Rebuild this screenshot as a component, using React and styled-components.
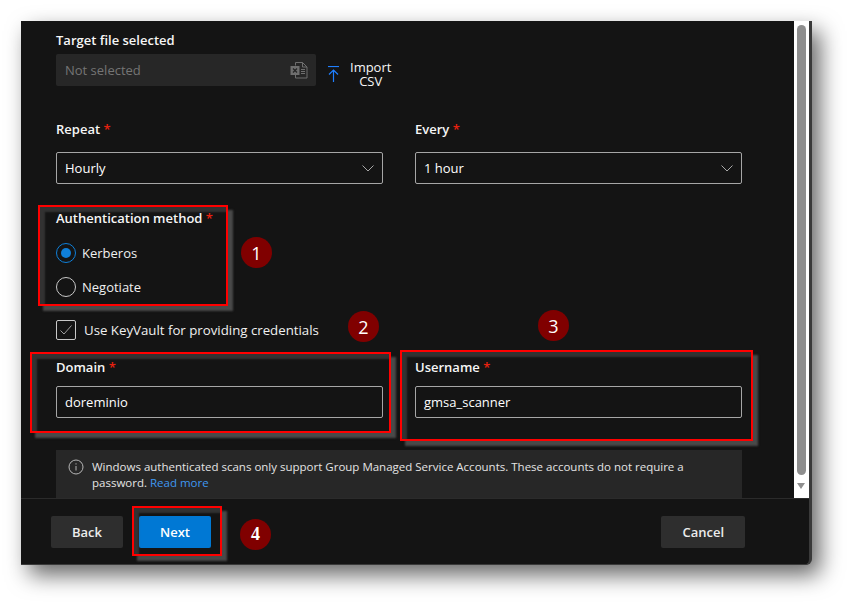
import React from 'react'
import styled, { createGlobalStyle } from 'styled-components'

const Global = createGlobalStyle`
  html, body { margin: 0; background: #fff; }
  body { font-family: "Open Sans", "Noto Sans", "Liberation Sans", sans-serif; }
  * { box-sizing: border-box; }
`

function Chevron() {
  return (
    <svg width="12" height="7" viewBox="0 0 12 7" fill="none" stroke="#a8a8a8" strokeWidth="1">
      <path d="M.5.5L6 6l5.500-5.500" />
    </svg>
  )
}

function ExcelIcon() {
  return (
    <svg width="18" height="17" viewBox="0 0 18 17" fill="none" stroke="#6f6f6f" strokeWidth="1">
      <path d="M5.5 3.5V.5h7l4.500 4.500v11h-11.500v-3" />
      <path d="M12.500.5v4.500h4.500" />
      <path d="M11 7.500h4M11 9.500h4M11 11.500h4" />
      <rect x=".5" y="4" width="9" height="9" fill="#6f6f6f" stroke="none" />
      <path d="M3 6.500l4 4M7 6.500l-4 4" stroke="#272727" strokeWidth="1.300" />
    </svg>
  )
}

function UploadIcon() {
  return (
    <svg width="11" height="16" viewBox="0 0 11 16" fill="none" stroke="#1f7fff" strokeWidth="1.200">
      <path d="M0 .5h11" />
      <path d="M5.500 16V4M1 8.500L5.500 4 10 8.500" />
    </svg>
  )
}

function InfoIcon() {
  return (
    <svg width="16" height="16" viewBox="0 0 16 16" fill="none" stroke="#b5b5b5" strokeWidth="1">
      <circle cx="8" cy="8" r="7" />
      <path d="M8 7v4.500M8 4.300v1.200" />
    </svg>
  )
}

function CheckIcon() {
  return (
    <svg width="14" height="12" viewBox="0 0 14 12" fill="none" stroke="#a0a0a0" strokeWidth="1">
      <path d="M1.500 6.500l3.500 3.500 7.500-8.500" />
    </svg>
  )
}

export default function App() {
  return (
    <>
      <Global />
      <Page>
        <Window>
          <Main>
            <Content>
              <Label>Target file selected</Label>
              <FileRow>
                <FileBox>
                  <span>Not selected</span>
                  <ExcelIcon />
                </FileBox>
                <ImportAction>
                  <UploadIcon />
                  <ImportText>Import<br />CSV</ImportText>
                </ImportAction>
              </FileRow>

              <Columns $top={33}>
                <div>
                  <Label>Repeat <Star>*</Star></Label>
                  <Select $top={13}>Hourly<Chevron /></Select>
                </div>
                <div>
                  <Label>Every <Star>*</Star></Label>
                  <Select $top={13}>1 hour<Chevron /></Select>
                </div>
              </Columns>

              <AuthLabel>Authentication method <Star>*</Star></AuthLabel>
              <Choice $top={15}><Radio $on />Kerberos</Choice>
              <Choice $top={14}><Radio />Negotiate</Choice>

              <KeyVault><CheckBox><CheckIcon /></CheckBox>Use KeyVault for providing credentials</KeyVault>

              <Columns $top={17}>
                <div>
                  <Label>Domain <Star>*</Star></Label>
                  <Select $top={9}>doreminio</Select>
                </div>
                <div>
                  <Label>Username <Star>*</Star></Label>
                  <Select $top={9}>gmsa_scanner</Select>
                </div>
              </Columns>

              <Notice>
                <InfoIcon />
                <p>
                  Windows authenticated scans only support Group Managed Service Accounts. These accounts do not require a
                  password. <a>Read more</a>
                </p>
              </Notice>
            </Content>
            <Scrollbar>
              <Thumb />
              <DownArrow />
            </Scrollbar>
          </Main>
          <Footer>
            <Button>Back</Button>
            <Button $primary>Next</Button>
            <Button $push>Cancel</Button>
          </Footer>
        </Window>

        <RedBox $x={38} $y={205} $w={190} $h={101} />
        <RedBox $x={30} $y={352} $w={361} $h={81} />
        <RedBox $x={400} $y={350} $w={353} $h={91} />
        <RedBox $x={132} $y={506} $w={90} $h={50} />

        <Badge $x={241} $y={237}>1</Badge>
        <Badge $x={348} $y={311}>2</Badge>
        <Badge $x={538} $y={310}>3</Badge>
        <Badge $x={240} $y={519} $serif>4</Badge>
      </Page>
    </>
  )
}

const Page = styled.div`
  position: relative;
  width: 854px;
  height: 607px;
  padding: 21px 0 0 21px;
  overflow: hidden;
`
const Window = styled.div`
  width: 791px;
  height: 544px;
  display: flex;
  flex-direction: column;
  background: #141414;
  border-right: 3px solid #3a3a3a;
  border-bottom: 1px solid #3a3a3a;
  border-bottom-right-radius: 6px;
  box-shadow: 8px 10px 22px rgba(0, 0, 0, 0.6);
`
const Main = styled.div`
  flex: 1;
  display: flex;
  min-height: 0;
`
const Content = styled.div`
  flex: 1;
  padding: 9px 0 0 35px;
`
const Label = styled.div`
  font-size: 13px;
  font-weight: 600;
  line-height: 20px;
  color: #f6f6f6;
`
const Star = styled.span`
  color: #e8210f;
`
const FileRow = styled.div`
  display: flex;
  align-items: flex-start;
  height: 32px;
  margin-top: 4px;
`
const FileBox = styled.div`
  width: 260px;
  height: 32px;
  margin-right: 12px;
  padding: 0 8px 0 9px;
  display: flex;
  align-items: center;
  justify-content: space-between;
  background: #272727;
  border-radius: 2px;
  font-size: 13px;
  color: #757575;
`
const ImportAction = styled.div`
  display: flex;
  align-items: center;
  margin-top: 6px;
`
const ImportText = styled.div`
  margin-left: 11px;
  font-size: 13px;
  line-height: 14px;
  text-align: center;
  color: #f6f6f6;
`
const Columns = styled.div`
  display: grid;
  grid-template-columns: 327px 327px;
  column-gap: 32px;
  margin-top: ${p => p.$top}px;
`
const Select = styled.div`
  height: 32px;
  margin-top: ${p => p.$top}px;
  padding: 0 8px;
  display: flex;
  align-items: center;
  justify-content: space-between;
  border: 1px solid #a6a6a6;
  border-radius: 2px;
  font-size: 13px;
  color: #fff;
`
const AuthLabel = styled(Label)`
  margin-top: 24px;
`
const Choice = styled.div`
  display: flex;
  align-items: center;
  gap: 6px;
  height: 20px;
  margin-top: ${p => p.$top}px;
  font-size: 13px;
  color: #f0f0f0;
`
const Radio = styled.span`
  position: relative;
  width: 20px;
  height: 20px;
  border-radius: 50%;
  border: 1px solid ${p => (p.$on ? '#0f7fd8' : '#c8c8c8')};
  &::after {
    content: '';
    display: ${p => (p.$on ? 'block' : 'none')};
    position: absolute;
    inset: 4px;
    border-radius: 50%;
    background: #0f7fd8;
  }
`
const KeyVault = styled.div`
  display: flex;
  align-items: center;
  gap: 8px;
  height: 20px;
  margin-top: 23px;
  font-size: 13.250px;
  color: #f0f0f0;
`
const CheckBox = styled.span`
  width: 20px;
  height: 20px;
  display: flex;
  align-items: center;
  justify-content: center;
  border: 1px solid #c8c8c8;
  border-radius: 2px;
`
const Notice = styled.div`
  width: 686px;
  height: 48px;
  margin-top: 32px;
  padding: 9px 12px;
  display: flex;
  gap: 8px;
  background: #272727;
  svg { flex: none; }
  p {
    margin: 0;
    font-size: 11.500px;
    line-height: 16px;
    color: #e4e4e4;
  }
  a { color: #3f97f0; }
`
const Scrollbar = styled.div`
  position: relative;
  width: 15px;
  background: #fff;
`
const Thumb = styled.div`
  position: absolute;
  top: 4px;
  left: 3px;
  width: 9px;
  height: 450px;
  border-radius: 5px;
  background: #8e8e8e;
`
const DownArrow = styled.div`
  position: absolute;
  bottom: 9px;
  left: 3px;
  border-left: 4.500px solid transparent;
  border-right: 4.500px solid transparent;
  border-top: 6px solid #8e8e8e;
`
const Footer = styled.div`
  height: 66px;
  flex: none;
  padding: 17px 64px 0 30px;
  display: flex;
  align-items: flex-start;
  gap: 16px;
  border-top: 1px solid #2b2b2b;
`
const Button = styled.div`
  height: 32px;
  padding: 0 21px;
  min-width: 72px;
  margin-left: ${p => (p.$push ? 'auto' : '0')};
  display: flex;
  align-items: center;
  justify-content: center;
  border-radius: 2px;
  font-size: 13px;
  font-weight: 600;
  color: ${p => (p.$primary ? '#fff' : '#ececec')};
  background: ${p => (p.$primary ? '#0078d4' : '#2e2e2e')};
`
const RedBox = styled.div`
  position: absolute;
  left: ${p => p.$x}px;
  top: ${p => p.$y}px;
  width: ${p => p.$w}px;
  height: ${p => p.$h}px;
  border: 2px solid #ff0000;
  box-shadow: 5px 5px 2px rgba(95, 95, 95, 0.7), inset 5px 5px 2px rgba(95, 95, 95, 0.4);
`
const Badge = styled.div`
  position: absolute;
  left: ${p => p.$x}px;
  top: ${p => p.$y}px;
  width: 31px;
  height: 31px;
  display: flex;
  align-items: center;
  justify-content: center;
  border-radius: 50%;
  background: #800000;
  color: #fff;
  font-family: ${p => (p.$serif ? '"Liberation Serif", serif' : '"Open Sans", sans-serif')};
  font-weight: ${p => (p.$serif ? 700 : 400)};
  font-size: 18px;
`
